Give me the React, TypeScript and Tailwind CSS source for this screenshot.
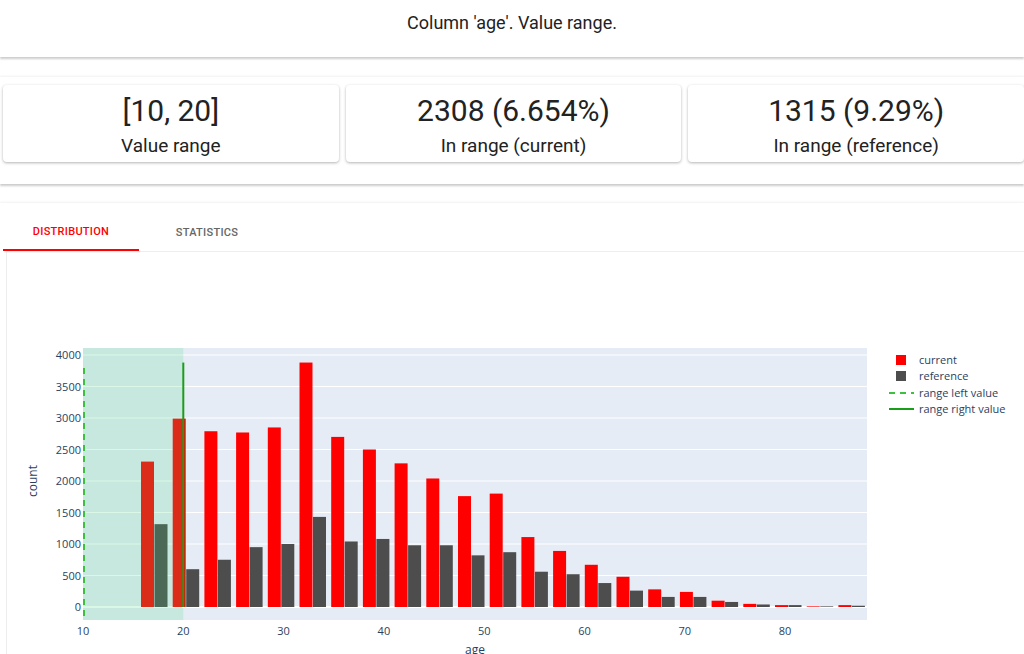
import React from "react";

const cur = [2308, 2990, 2790, 2770, 2850, 3880, 2700, 2500, 2280, 2040, 1760, 1800, 1110, 890, 670, 480, 280, 240, 100, 50, 30, 10, 30];
const ref = [1315, 600, 750, 950, 1000, 1430, 1040, 1080, 980, 980, 820, 870, 560, 520, 380, 260, 160, 160, 80, 40, 30, 10, 20];
const OY = 251;
const y0 = 606 - OY;
const k = 63 / 1000;

function Chart() {
  const x0 = 82, x1 = 866, top = 347 - OY, bot = 619 - OY;
  const xs = (v: number) => 82 + (v - 10) * 10.03;
  return (
    <svg width="1024" height="404" className="block" style={{ fontFamily: "'Open Sans', 'DejaVu Sans', sans-serif" }}>
      <rect x={x0} y={top} width={x1 - x0} height={bot - top} fill="#e5ecf6" />
      {[0, 500, 1000, 1500, 2000, 2500, 3000, 3500, 4000].map((v) => (
        <g key={v}>
          <line x1={x0} x2={x1} y1={y0 - v * k} y2={y0 - v * k} stroke="#fff" strokeWidth={v === 0 ? 2 : 1} />
          <text x={x0 - 2} y={y0 - v * k + 4} fontSize="11" fill="#2a3f5f" textAnchor="end">{v}</text>
        </g>
      ))}
      {cur.map((c, i) => {
        const x = 140 + i * 31.7;
        return (
          <g key={i}>
            <rect x={x} y={y0 - c * k} width={13} height={c * k} fill="#ff0000" />
            <rect x={x + 13.5} y={y0 - ref[i] * k} width={13} height={ref[i] * k} fill="#4d4d4d" />
          </g>
        );
      })}
      <rect x={x0} y={top} width={xs(20) - x0} height={bot - top} fill="#4ade80" opacity="0.2" />
      <line x1={x0 + 1} x2={x0 + 1} y1={top + 20} y2={bot} stroke="#3fbf3f" strokeWidth="2" strokeDasharray="6 5" />
      <line x1={xs(20)} x2={xs(20)} y1={y0 - 3880 * k} y2={y0} stroke="#1a9e1a" strokeWidth="2" />
      {[10, 20, 30, 40, 50, 60, 70, 80].map((v) => (
        <text key={v} x={xs(v)} y={634 - OY} fontSize="11" fill="#2a3f5f" textAnchor="middle">{v}</text>
      ))}
      <text x={474} y={653 - OY} fontSize="12" fill="#2a3f5f" textAnchor="middle">age</text>
      <text x={36} y={480 - OY} fontSize="12" fill="#2a3f5f" textAnchor="middle" transform={`rotate(-90 36 ${480 - OY})`}>count</text>
      <g fontSize="11" fill="#2a3f5f">
        <rect x={895} y={354 - OY} width={10} height={10} fill="#ff0000" />
        <text x={918} y={363 - OY}>current</text>
        <rect x={895} y={370 - OY} width={10} height={10} fill="#4d4d4d" />
        <text x={918} y={379 - OY}>reference</text>
        <line x1={888} x2={913} y1={392 - OY} y2={392 - OY} stroke="#3fbf3f" strokeWidth="2" strokeDasharray="6 5" />
        <text x={918} y={396 - OY}>range left value</text>
        <line x1={888} x2={913} y1={408 - OY} y2={408 - OY} stroke="#1a9e1a" strokeWidth="2" />
        <text x={918} y={412 - OY}>range right value</text>
      </g>
    </svg>
  );
}

function Card({ v, l }: { v: string; l: string }) {
  return (
    <div className="flex-1 h-[77px] bg-white shadow-[0_1px_3px_rgba(0,0,0,0.3)] rounded-sm flex flex-col items-center justify-center">
      <div className="text-[30px] leading-[36px] text-[#222] mt-[3px]">{v}</div>
      <div className="text-[19px] leading-[24px] mt-[5px] text-[#222]">{l}</div>
    </div>
  );
}

export default function App() {
  return (
    <div className="w-[1024px] h-[654px] overflow-hidden bg-white" style={{ fontFamily: "Roboto, 'Liberation Sans', sans-serif" }}>
      <div className="h-[57px] flex items-center justify-center text-[18px] text-[#222] shadow-[0_2px_2px_rgba(0,0,0,0.2)] pb-[18px] pt-[6px]">
        Column 'age'. Value range.
      </div>
      <div className="mt-[20px] h-[107px] shadow-[0_-1px_2px_rgba(0,0,0,0.06),0_2px_2px_rgba(0,0,0,0.2)] flex gap-[7px] pl-[3px] pt-[8px]">
        <Card v="[10, 20]" l="Value range" />
        <Card v="2308 (6.654%)" l="In range (current)" />
        <Card v="1315 (9.29%)" l="In range (reference)" />
      </div>
      <div className="mt-[19px] shadow-[0_-1px_2px_rgba(0,0,0,0.06)]">
        <div className="flex h-[48px] pt-[12px] text-[11px] font-medium tracking-wide">
          <div className="w-[136px] ml-[3px] flex items-center justify-center text-[#ff0000] border-b-2 border-[#ff0000]">DISTRIBUTION</div>
          <div className="w-[136px] flex items-center justify-center text-[#666]">STATISTICS</div>
        </div>
        <div className="ml-[6px] border-l border-t border-[#eee]">
          <div className="-ml-[6px]"><Chart /></div>
        </div>
      </div>
    </div>
  );
}
